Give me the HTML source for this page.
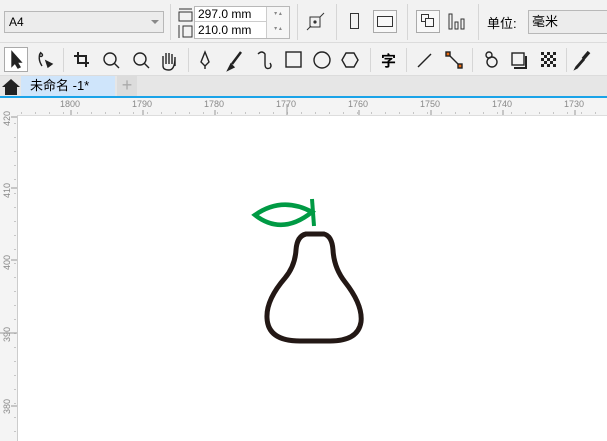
<!DOCTYPE html><html><head><meta charset="utf-8"><style>
*{margin:0;padding:0;box-sizing:border-box}
body{width:607px;height:441px;overflow:hidden;background:#f2f2f2;font-family:"Liberation Sans","Noto Sans CJK SC",sans-serif;position:relative}
.a{position:absolute}
.sep{position:absolute;width:1px;background:#d6d6d6}
</style></head><body>
<!-- toolbar1 -->
<div class="a" style="left:0;top:0;width:607px;height:43px;background:#f2f2f2;border-bottom:1px solid #dcdcdc"></div>
<div class="a" style="left:4px;top:11px;width:160px;height:22px;border:1px solid #b8b8b8;background:#ececec;font-size:12px;line-height:20px;padding-left:4px">A4</div>
<div class="a" style="left:151px;top:20px;border-left:4px solid transparent;border-right:4px solid transparent;border-top:4px solid #888"></div>
<div class="sep" style="left:170px;top:4px;height:36px"></div>
<svg class="a" style="left:177px;top:7px" width="18" height="32"><rect x="2" y="5" width="13" height="9" fill="none" stroke="#333"/><line x1="2" y1="2" x2="15" y2="2" stroke="#333"/><rect x="6" y="19" width="9" height="11" fill="none" stroke="#333"/><line x1="2" y1="18" x2="2" y2="31" stroke="#333"/></svg>
<div class="a" style="left:194px;top:6px;width:96px;height:33px;border:1px solid #b8b8b8;background:#fff"></div>
<div class="a" style="left:195px;top:7px;width:71px;height:15px;font-size:12px;line-height:15px;padding-left:3px;border-bottom:1px solid #ccc">297.0 mm</div>
<div class="a" style="left:195px;top:23px;width:71px;height:15px;font-size:12px;line-height:15px;padding-left:3px">210.0 mm</div>
<div class="a" style="left:266px;top:7px;width:23px;height:31px;border-left:1px solid #ccc;background:#f6f6f6;font-size:6px;color:#888;line-height:15px;text-align:center">▾ ▴<br>▾ ▴</div>
<div class="sep" style="left:297px;top:4px;height:36px"></div>
<svg class="a" style="left:306px;top:12px" width="20" height="20"><rect x="4" y="5" width="10" height="10" fill="none" stroke="#333"/><circle cx="9" cy="10" r="1.6" fill="#333"/><line x1="1" y1="18" x2="5" y2="14" stroke="#333"/><line x1="14" y1="5" x2="18" y2="1" stroke="#333"/></svg>
<div class="sep" style="left:336px;top:4px;height:36px"></div>
<div class="a" style="left:350px;top:13px;width:9px;height:16px;border:1px solid #333"></div>
<div class="a" style="left:373px;top:10px;width:24px;height:23px;border:1px solid #aaa;background:#f8f8f8"></div>
<div class="a" style="left:377px;top:16px;width:16px;height:11px;border:1px solid #333"></div>
<div class="sep" style="left:407px;top:4px;height:36px"></div>
<div class="a" style="left:416px;top:10px;width:24px;height:23px;border:1px solid #aaa;background:#f8f8f8"></div>
<div class="a" style="left:421px;top:14px;width:8px;height:8px;border:1px solid #333"></div>
<div class="a" style="left:425px;top:18px;width:9px;height:9px;border:1px solid #333;background:#f8f8f8"></div>
<svg class="a" style="left:446px;top:12px" width="22" height="20"><rect x="3" y="2" width="3" height="15" fill="none" stroke="#333"/><rect x="9" y="10" width="3" height="7" fill="none" stroke="#333"/><rect x="15" y="7" width="3" height="10" fill="none" stroke="#333"/></svg>
<div class="sep" style="left:478px;top:4px;height:36px"></div>
<div class="a" style="left:487px;top:13px;font-size:13px">单位:</div>
<div class="a" style="left:528px;top:10px;width:85px;height:24px;border:1px solid #b8b8b8;background:#ececec;font-size:13px;line-height:22px;padding-left:3px">毫米</div>
<!-- toolbar2 -->
<div class="a" style="left:0;top:44px;width:607px;height:32px;background:#f2f2f2;border-bottom:1px solid #dcdcdc"></div>
<div class="a" style="left:4px;top:47px;width:24px;height:25px;border:1px solid #aaa;background:#fff"></div>
<svg class="a" style="left:0;top:44px" width="607" height="32" fill="none" stroke="#222" stroke-width="1.4">
<path d="M12 8 L12 22 L15 19 L18 24 L20 23 L17 18 L21 18 Z" fill="#222"/>
<path d="M41 8 Q37 14 42 22" /><circle cx="41" cy="11" r="1.5"/><path d="M46 17 L52 20 L48 23 Z" fill="#222"/>
<path d="M78 8 V19 H89 M74 12 H86 V23" stroke-width="2"/>
<circle cx="110" cy="15" r="6"/><line x1="114" y1="19" x2="119" y2="24"/>
<circle cx="140" cy="15" r="6"/><line x1="144" y1="19" x2="149" y2="24"/>
<path d="M163 22 V12 M166 20 V9 M169 20 V9 M172 20 V10 M175 22 V13 Q175 26 169 26 Q163 26 163 22"/>
<path d="M205 8 L201 18 L205 22 L209 18 Z M205 22 V25"/>
<path d="M241 8 L232 20 M231 21 L229 25 L233 23 Z" stroke-width="2.5"/>
<path d="M258 10 Q262 6 265 10 V20 Q265 26 270 24 Q272 22 270 19"/>
<rect x="286" y="8" width="15" height="15"/>
<circle cx="322" cy="16" r="8"/>
<path d="M346 9 H354 L358 16 L354 23 H346 L342 16 Z"/>
<line x1="418" y1="23" x2="431" y2="10"/>
<line x1="448" y1="10" x2="460" y2="22"/><rect x="446" y="8" width="4" height="4" fill="#e86a10"/><rect x="458" y="20" width="4" height="4" fill="#e86a10"/>
<circle cx="489" cy="11" r="3"/><circle cx="492" cy="18" r="5"/>
<rect x="512" y="9" width="12" height="12"/><path d="M526 12 V24 H514" stroke-width="2"/>
<path d="M589 8 L583 15" stroke-width="3.5"/>
<path d="M583 15 L576 23 L575 25 L577 24 L584 16 Z" fill="#e86a10"/>
</svg>
<div class="a" style="left:381px;top:50px;font-size:15px;font-weight:bold">字</div>
<svg class="a" style="left:541px;top:52px" width="16" height="16"><g fill="#222"><rect x="0" y="0" width="3" height="3"/><rect x="6" y="0" width="3" height="3"/><rect x="12" y="0" width="3" height="3"/><rect x="3" y="3" width="3" height="3"/><rect x="9" y="3" width="3" height="3"/><rect x="0" y="6" width="3" height="3"/><rect x="6" y="6" width="3" height="3"/><rect x="12" y="6" width="3" height="3"/><rect x="3" y="9" width="3" height="3"/><rect x="9" y="9" width="3" height="3"/><rect x="0" y="12" width="3" height="3"/><rect x="6" y="12" width="3" height="3"/><rect x="12" y="12" width="3" height="3"/></g></svg>
<div class="sep" style="left:63px;top:48px;height:24px"></div>
<div class="sep" style="left:188px;top:48px;height:24px"></div>
<div class="sep" style="left:370px;top:48px;height:24px"></div>
<div class="sep" style="left:406px;top:48px;height:24px"></div>
<div class="sep" style="left:472px;top:48px;height:24px"></div>
<div class="sep" style="left:566px;top:48px;height:24px"></div>
<!-- tabs -->
<div class="a" style="left:0;top:76px;width:607px;height:20px;background:#e6e6e6"></div>
<svg class="a" style="left:1px;top:78px" width="20" height="18"><path d="M1 9 L10 1 L19 9 H16 V17 H4 V9 Z" fill="#222"/></svg>
<div class="a" style="left:21px;top:76px;width:94px;height:20px;background:#cfe5fb;font-size:13px;line-height:20px;padding-left:9px">未命名 -1*</div>
<div class="a" style="left:117px;top:76px;width:20px;height:20px;background:#dcdcdc;color:#aaa;font-size:18px;line-height:19px;text-align:center">+</div>
<div class="a" style="left:0;top:96px;width:607px;height:2px;background:#1aa3e8"></div>
<!-- rulers -->
<div class="a" style="left:0;top:98px;width:607px;height:17px;background:#f4f4f4"></div>
<div class="a" style="left:0;top:98px;width:17px;height:343px;background:#f4f4f4"></div>
<svg class="a" style="left:0;top:98px" width="607" height="343" font-family="Liberation Sans" font-size="9" fill="#888">
<g stroke="#999">
<line x1="71" y1="12" x2="71" y2="17"/><line x1="143" y1="12" x2="143" y2="17"/><line x1="215" y1="12" x2="215" y2="17"/><line x1="287" y1="6" x2="287" y2="17"/><line x1="359" y1="12" x2="359" y2="17"/><line x1="431" y1="12" x2="431" y2="17"/><line x1="503" y1="12" x2="503" y2="17"/><line x1="575" y1="12" x2="575" y2="17"/>
<line x1="11" y1="19" x2="17" y2="19"/><line x1="11" y1="90" x2="17" y2="90"/><line x1="11" y1="162" x2="17" y2="162"/><line x1="0" y1="235" x2="17" y2="235"/><line x1="11" y1="308" x2="17" y2="308"/>
</g>
<g stroke="#999" stroke-dasharray="1 13"><line x1="21" y1="15" x2="607" y2="15"/><line x1="15" y1="25" x2="15" y2="343"/></g>
<text x="60" y="9">1800</text><text x="132" y="9">1790</text><text x="204" y="9">1780</text><text x="276" y="9">1770</text><text x="348" y="9">1760</text><text x="420" y="9">1750</text><text x="492" y="9">1740</text><text x="564" y="9">1730</text>
<g transform="rotate(-90)"><text x="-28" y="10">420</text><text x="-100" y="10">410</text><text x="-172" y="10">400</text><text x="-244" y="10">390</text><text x="-316" y="10">380</text></g>
</svg>
<!-- canvas -->
<div class="a" style="left:17px;top:115px;width:590px;height:326px;background:#fff;border-left:1px solid #ccc;border-top:1px solid #ddd"></div>
<svg class="a" style="left:0;top:0" width="607" height="441" fill="none">
<path d="M306 234 L324 234 Q332 236 333 250 Q334 268 345 282 Q363 305 361 322 Q358 341 330 341 L300 341 Q268 341 267 318 Q266 300 285 278 Q295 266 296 250 Q297 236 306 234 Z" stroke="#231815" stroke-width="5"/>
<path d="M255 215 Q282 196 312 212 Q282 236 255 215 Z" stroke="#009a44" stroke-width="4.5"/>
<line x1="312" y1="199" x2="314" y2="226" stroke="#009a44" stroke-width="4"/>
</svg>
</body></html>
